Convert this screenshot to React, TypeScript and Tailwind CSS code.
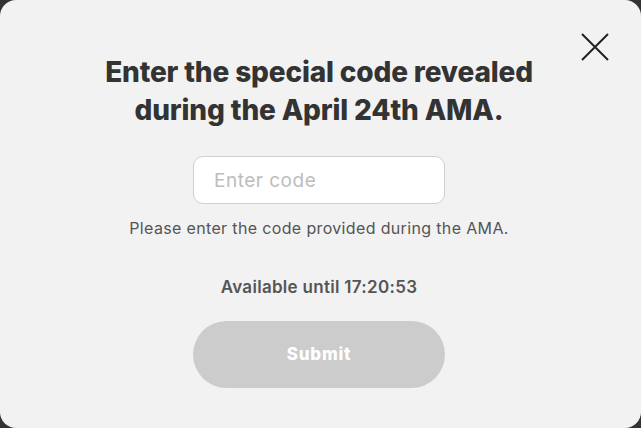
import { useState } from "react"

export default function App() {
  const [code, setCode] = useState("")

  return (
    <div className="h-[428px] w-[641px] bg-[#333333]" style={{ fontFamily: "Inter, 'Noto Sans', sans-serif" }}>
      <div className="relative flex h-full w-full flex-col items-center rounded-[16px] bg-[#f2f2f2] pr-[3px] pt-[53px]">
        <button className="absolute right-[31px] top-[32px] h-[30px] w-[30px] text-[#222]" aria-label="Close">
          <svg viewBox="0 0 30 30" className="h-full w-full" fill="none" stroke="currentColor" strokeWidth="2">
            <path d="M2 2 L28 28 M28 2 L2 28" />
          </svg>
        </button>

        <h2 className="text-center text-[28px] font-extrabold leading-[38px] tracking-[-0.15px] text-[#333]">
          Enter the special code revealed
          <br />
          during the April 24th AMA.
        </h2>

        <input
          value={code}
          onChange={(e) => setCode(e.target.value)}
          placeholder="Enter code"
          className="mt-[27px] h-[48px] w-[252px] rounded-[10px] border border-[#d0d0d0] bg-white px-5 text-[19px] tracking-[0.5px] text-[#333] outline-none placeholder:text-[#bdbdbd]"
        />
        <p className="mt-[14px] text-[16px] leading-[20px] tracking-[0.35px] text-[#555]">
          Please enter the code provided during the AMA.
        </p>

        <p className="mt-[39px] text-[17px] font-semibold leading-[20px] tracking-[0.3px] text-[#555]">
          Available until 17:20:53
        </p>

        <button className="mt-[24px] h-[67px] w-[252px] rounded-full bg-[#cccccc] text-[17px] font-extrabold tracking-[0.8px] text-white">
          Submit
        </button>
      </div>
    </div>
  )
}
